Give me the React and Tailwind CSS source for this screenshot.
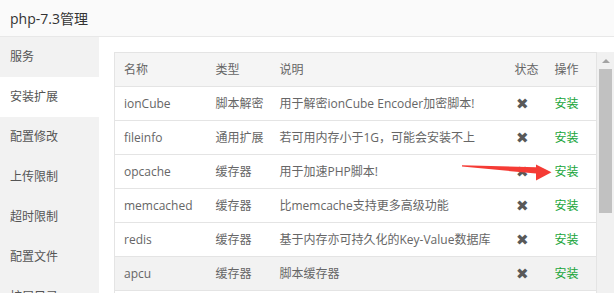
import React from "react";

const menu = ["服务", "安装扩展", "配置修改", "上传限制", "超时限制", "配置文件", "扩展目录"];

const rows = [
  { name: "ionCube", type: "脚本解密", desc: "用于解密ionCube Encoder加密脚本!" },
  { name: "fileinfo", type: "通用扩展", desc: "若可用内存小于1G，可能会安装不上" },
  { name: "opcache", type: "缓存器", desc: "用于加速PHP脚本!" },
  { name: "memcached", type: "缓存器", desc: "比memcache支持更多高级功能" },
  { name: "redis", type: "缓存器", desc: "基于内存亦可持久化的Key-Value数据库" },
  { name: "apcu", type: "缓存器", desc: "脚本缓存器", hover: true },
  { name: "imagemagick", type: "通用扩展", desc: "Imagick高性能图形库" },
];

const font = {
  fontFamily: '"Open Sans", "Noto Sans CJK SC", sans-serif',
};

export default function App() {
  return (
    <div
      className="w-[614px] h-[293px] overflow-hidden bg-white text-[12px] text-[#666] relative"
      style={font}
    >
      {/* Header */}
      <div className="h-[37px] border-b border-[#e8e8e8] bg-[#fafafa] flex items-center pl-[10px] text-[14px] text-[#333]">
        php-7.3管理
      </div>

      <div className="flex h-[256px]">
        {/* Sidebar */}
        <div className="w-[99px] shrink-0 bg-[#f2f2f2] flex flex-col">
          {menu.map((m, i) => (
            <div
              key={m}
              className={
                "h-[40px] shrink-0 flex items-center pl-[10px] text-[#555] " +
                (i === 1 ? "bg-white" : "")
              }
            >
              {m}
            </div>
          ))}
        </div>

        {/* Content */}
        <div className="flex-1 pl-[15px] pt-[15px] flex min-w-0">
          <div className="flex-1 min-w-0">
            <table className="w-[483px] border-collapse border border-[#e4e4e4] table-fixed">
              <colgroup>
                <col className="w-[91px]" />
                <col className="w-[64px]" />
                <col className="w-[235px]" />
                <col className="w-[40px]" />
                <col className="w-[52px]" />
              </colgroup>
              <thead>
                <tr className="h-[34px] bg-[#f5f5f5] border-b border-[#e4e4e4]">
                  <th className="font-normal text-left pl-[9px]">名称</th>
                  <th className="font-normal text-left pl-[10px]">类型</th>
                  <th className="font-normal text-left pl-[10px]">说明</th>
                  <th className="font-normal text-left pl-[10px]">状态</th>
                  <th className="font-normal text-left pl-[10px]">操作</th>
                </tr>
              </thead>
              <tbody>
                {rows.map((r) => (
                  <tr
                    key={r.name}
                    className={
                      "h-[34px] border-b border-[#e4e4e4] " +
                      (r.hover ? "bg-[#f2f2f2]" : "")
                    }
                  >
                    <td className="pl-[9px] whitespace-nowrap">{r.name}</td>
                    <td className="pl-[10px] whitespace-nowrap">{r.type}</td>
                    <td className="pl-[10px] whitespace-nowrap">{r.desc}</td>
                    <td className="pl-[11px] text-[#595959] text-[15px] leading-none">✖</td>
                    <td className="pl-[10px] text-[#20a53a]">安装</td>
                  </tr>
                ))}
              </tbody>
            </table>
          </div>

          {/* Scrollbar */}
          <div className="w-[17px] shrink-0 bg-[#f1f1f1] flex flex-col items-center">
            <div className="h-[17px] flex items-center justify-center">
              <div className="w-0 h-0 border-l-[4px] border-r-[4px] border-b-[4px] border-l-transparent border-r-transparent border-b-[#a3a3a3]" />
            </div>
            <div className="w-[13px] h-[144px] bg-[#c1c1c1]" />
          </div>
        </div>
      </div>

      {/* Red arrow annotation */}
      <svg
        className="absolute left-0 top-0 pointer-events-none"
        width="614"
        height="293"
      >
        <polygon
          points="462,165.3 536,167.2 536,164.5 551.5,172.2 536,180.5 536,173.6 462,166.4"
          fill="#f53b35"
        />
      </svg>
    </div>
  );
}
